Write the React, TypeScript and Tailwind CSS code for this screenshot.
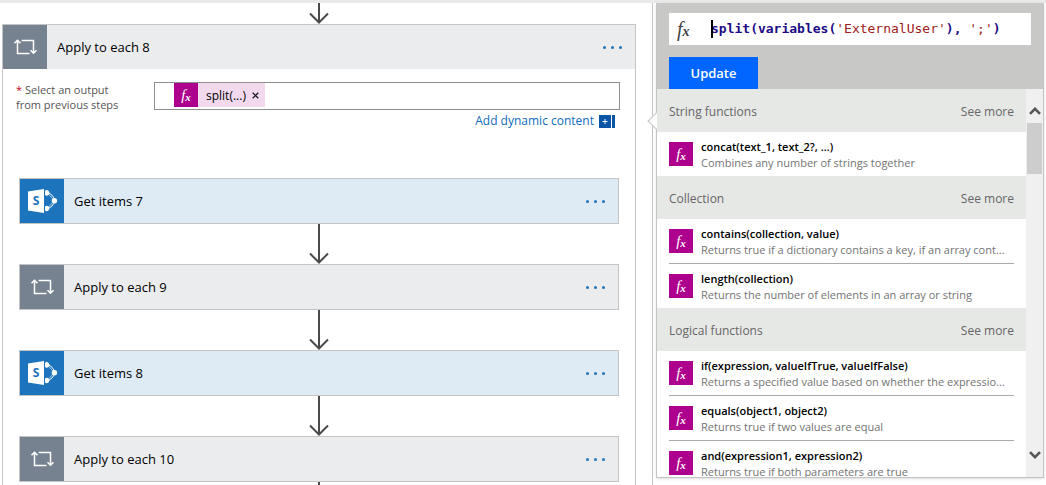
import React, { useState } from "react";

type StepKind = "loop" | "sharepoint";

const steps: { title: string; kind: StepKind }[] = [
  { title: "Get items 7", kind: "sharepoint" },
  { title: "Apply to each 9", kind: "loop" },
  { title: "Get items 8", kind: "sharepoint" },
  { title: "Apply to each 10", kind: "loop" },
];

const groups = [
  {
    name: "String functions",
    items: [{ sig: "concat(text_1, text_2?, ...)", text: "Combines any number of strings together" }],
  },
  {
    name: "Collection",
    items: [
      {
        sig: "contains(collection, value)",
        text: "Returns true if a dictionary contains a key, if an array cont...",
      },
      { sig: "length(collection)", text: "Returns the number of elements in an array or string" },
    ],
  },
  {
    name: "Logical functions",
    items: [
      {
        sig: "if(expression, valueIfTrue, valueIfFalse)",
        text: "Returns a specified value based on whether the expressio...",
      },
      { sig: "equals(object1, object2)", text: "Returns true if two values are equal" },
      { sig: "and(expression1, expression2)", text: "Returns true if both parameters are true" },
    ],
  },
];

function LoopIcon() {
  return (
    <svg viewBox="0 0 44 44" className="size-11 shrink-0 bg-[#76828f]" fill="none" stroke="#fff" strokeWidth="1.5" aria-hidden="true">
      <path d="M14.5 15v13.500h12M11.500 18.200l3-3 3 3" />
      <path d="M18.600 15.500h11.900v12.600M27.500 25.200l3 3 3-3" />
    </svg>
  );
}

function SharePointIcon() {
  return (
    <svg viewBox="0 0 44 44" className="size-11 shrink-0 bg-[#1b74bc]" aria-hidden="true">
      <path d="M8 12.4 24 10v24L8 31.6z" fill="#fff" />
      <text x="16" y="26.4" textAnchor="middle" fontSize="12" fontWeight="700" fontFamily="Open Sans, sans-serif" fill="#1b74bc">
        S
      </text>
      <path d="M27 13.600c4.200.8 6.900 3.800 7.500 8-.6 4.200-3.300 7.200-7.500 8" fill="none" stroke="#fff" strokeWidth="1" />
      <path d="M27 13.600l7.400 8-7.400 8" fill="none" stroke="#fff" strokeWidth=".6" />
      <path d="M25 11.700a2.700 2.700 0 1 1 0 4.200zM25 27.400a2.700 2.700 0 1 1 0 4.200z" fill="#fff" />
      <circle cx="34.400" cy="21.700" r="2.700" fill="#fff" />
    </svg>
  );
}

function Arrow({ short = false }: { short?: boolean }) {
  return short ? (
    <svg viewBox="0 0 20 21" className="mx-auto block h-[21px] w-5" fill="none" stroke="#4a4a4a" strokeWidth="2" aria-hidden="true">
      <path d="M10 0v20M1 10.500l9 9 9-9" />
    </svg>
  ) : (
    <svg viewBox="0 0 20 40" className="mx-auto block h-10 w-5" fill="none" stroke="#4a4a4a" strokeWidth="2" aria-hidden="true">
      <path d="M10 0v39M1 29.500l9 9 9-9" />
    </svg>
  );
}

function MoreButton({ title }: { title: string }) {
  return (
    <button type="button" aria-label={`Menu for ${title}`} className="mr-[13px] ml-auto flex h-6 items-center gap-[5px]">
      <span className="size-[3px] rounded-full bg-[#1b74bc]" />
      <span className="size-[3px] rounded-full bg-[#1b74bc]" />
      <span className="size-[3px] rounded-full bg-[#1b74bc]" />
    </button>
  );
}

function StepHeader({ title, kind }: { title: string; kind: StepKind }) {
  return (
    <div className={`flex h-11 items-center ${kind === "loop" ? "bg-[#ebecee]" : "bg-[#deebf4]"}`}>
      {kind === "loop" ? <LoopIcon /> : <SharePointIcon />}
      <h2 className="pt-[2px] pl-[10px] text-[13px] text-black">{title}</h2>
      <MoreButton title={title} />
    </div>
  );
}

function Fx() {
  return (
    <span aria-hidden="true" className="flex size-6 shrink-0 items-center justify-center bg-[#ad008c] font-['Liberation_Serif',serif] text-[15px] leading-none text-white italic">
      f<span className="pt-1 text-[11px] leading-none font-bold">x</span>
    </span>
  );
}

function Chevron({ down = false }: { down?: boolean }) {
  return (
    <svg viewBox="0 0 12 8" className="h-2 w-3" fill="none" stroke="#555" strokeWidth="2.600" aria-hidden="true">
      <path d={down ? "M1 1.200l5 5 5-5" : "M1 6.800l5-5 5 5"} />
    </svg>
  );
}

function Designer() {
  return (
    <main className="min-w-0 flex-1 overflow-hidden border-r border-[#c4c4c4] pr-4 pl-[2px]">
      <Arrow short />
      <section className="border border-[#c4c4c4] bg-white pb-10">
        <StepHeader title="Apply to each 8" kind="loop" />
        <div className="flex items-start pt-[13px] pr-[15px] pl-[13px]">
          <label htmlFor="source" className="w-[138px] shrink-0 text-[11px] leading-[15px] text-[#555]">
            <span className="text-[#d0021b]">*</span> Select an output
            <br />
            from previous steps
          </label>
          <div className="min-w-0 flex-1">
            <div className="flex h-7 border border-[#8f8f8f] pl-[19px]">
              <span className="flex h-6 items-center bg-[#f2d9ee] text-xs text-black">
                <Fx />
                <span className="pt-[2px] pl-2">split(...)</span>
                <button type="button" aria-label="Remove split" className="flex h-6 w-[19px] items-center justify-center">
                  <svg viewBox="0 0 8 8" className="size-[7px]" stroke="#111" strokeWidth="1.400" aria-hidden="true">
                    <path d="M.8.8l6.400 6.400M7.200.8.8 7.200" />
                  </svg>
                </button>
              </span>
              <input id="source" type="text" className="min-w-0 flex-1 bg-transparent px-1 text-xs outline-none" />
            </div>
            <div className="flex h-[22px] items-center justify-end pr-[5px]">
              <button type="button" className="flex items-center gap-[5px] text-xs text-[#0f6cbd]">
                Add dynamic content
                <svg viewBox="0 0 16 13" className="h-[13px] w-4" aria-hidden="true">
                  <path d="M0 0h12v13H0zM13 0h3v13h-3z" fill="#0a55a5" />
                  <path d="M6 4v5M3.500 6.500h5" stroke="#fff" />
                </svg>
              </button>
            </div>
          </div>
        </div>
        <ol className="px-4 pt-[46px]">
          {steps.map((step) => (
            <li key={step.title}>
              <article className="border border-[#c4c4c4]">
                <StepHeader title={step.title} kind={step.kind} />
              </article>
              <Arrow />
            </li>
          ))}
        </ol>
      </section>
    </main>
  );
}

function ExpressionPanel() {
  const [expr, setExpr] = useState("split(variables('ExternalUser'), ';')");
  const parts = expr.split(/('[^']*')/);
  return (
    <aside className="relative mr-[2px] mb-[7px] ml-[3px] flex w-[388px] shrink-0 flex-col border-x border-b border-[#c4c4c4] bg-white shadow">
      <span className="absolute top-[112px] -left-[7px] size-3 rotate-45 border-b border-l border-[#c4c4c4] bg-white" />
      <div className="relative bg-[#c8c9c7] px-3 pt-[10px]">
        <div className="flex h-8 items-center bg-white">
          <span aria-hidden="true" className="flex w-[42px] items-center pl-2 font-['Liberation_Serif',serif] text-xl leading-none text-[#444] italic">
            f<span className="pt-[6px] text-sm leading-none font-bold">x</span>
          </span>
          <div className="relative h-[18px] flex-1 font-['DejaVu_Sans_Mono',monospace] text-[13px] leading-[18px]">
            <div aria-hidden="true" className="font-bold whitespace-pre text-[#1c0a86]">
              {parts.map((part, i) => (
                <span key={i} className={i % 2 ? "font-normal text-[#a02020]" : ""}>
                  {part}
                </span>
              ))}
            </div>
            <span className="absolute inset-y-0 left-0 w-[2px] bg-black" />
            <input
              type="text"
              aria-label="Expression"
              value={expr}
              onChange={(e) => setExpr(e.target.value)}
              className="absolute inset-0 w-full bg-transparent text-transparent outline-none"
            />
          </div>
        </div>
        <button type="button" className="mt-3 block h-8 w-[89px] bg-[#0066ff] pt-[2px] text-[13px] font-semibold text-white">
          Update
        </button>
      </div>
      <div className="relative flex min-h-0 flex-1">
        <div className="min-w-0 flex-1 overflow-hidden">
          {groups.map((group) => (
            <section key={group.name}>
              <div className="flex h-[43px] items-center justify-between bg-[#e6e8e6] px-3 pt-[2px] text-xs text-[#666]">
                <h3>{group.name}</h3>
                <a href="#more">See more</a>
              </div>
              <ul className="divide-y divide-[#aaa] px-3">
                {group.items.map((item) => (
                  <li key={item.sig}>
                    <button type="button" className="flex h-11 w-full items-center gap-2 text-left text-[11px] leading-4">
                      <Fx />
                      <span className="min-w-0 flex-1 pt-[2px]">
                        <span className="block truncate font-semibold text-black">{item.sig}</span>
                        <span className="block truncate text-[#737373]">{item.text}</span>
                      </span>
                    </button>
                  </li>
                ))}
              </ul>
            </section>
          ))}
        </div>
        <div aria-hidden="true" className="flex w-[17px] shrink-0 flex-col items-center bg-[#f0f0f0] pt-[18px] pb-[18px]">
          <Chevron />
          <span className="mt-2 h-[51px] w-[15px] bg-[#cdcdcd]" />
          <span className="flex-1" />
          <Chevron down />
        </div>
      </div>
    </aside>
  );
}

export default function App() {
  return (
    <div className="flex h-screen flex-col overflow-hidden bg-white font-['Open_Sans',sans-serif]">
      <div className="h-[3px] shrink-0 bg-[#e9e9e9]" />
      <div className="flex min-h-0 flex-1">
        <Designer />
        <ExpressionPanel />
      </div>
    </div>
  );
}
